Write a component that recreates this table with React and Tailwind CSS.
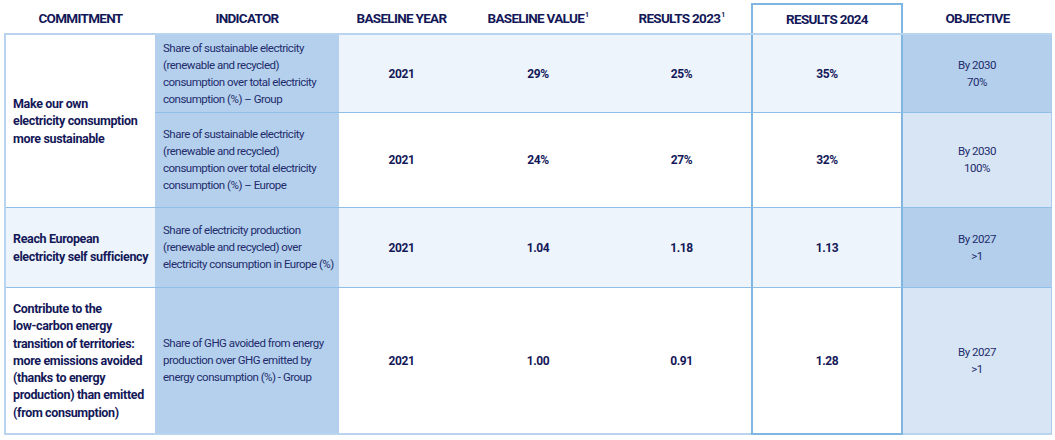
const rowBg = { light: 'bg-[#edf4fb]', white: 'bg-white' };

const rows = [
  {
    indicator: ['Share of sustainable electricity', '(renewable and recycled)', 'consumption over total electricity', 'consumption (%) – Group'],
    values: ['2021', '29%', '25%', '35%'],
    objective: ['By 2030', '70%'],
    bg: 'light',
    objBg: 'bg-[#b4cfeb]',
  },
  {
    indicator: ['Share of sustainable electricity', '(renewable and recycled)', 'consumption over total electricity', 'consumption (%) – Europe'],
    values: ['2021', '24%', '27%', '32%'],
    objective: ['By 2030', '100%'],
    bg: 'white',
    objBg: 'bg-[#d7e5f5]',
  },
  {
    indicator: ['Share of electricity production', '(renewable and recycled) over', 'electricity consumption in Europe (%)'],
    values: ['2021', '1.04', '1.18', '1.13'],
    objective: ['By 2027', '>1'],
    bg: 'light',
    objBg: 'bg-[#b4cfeb]',
  },
  {
    indicator: ['Share of GHG avoided from energy', 'production over GHG emitted by', 'energy consumption (%) - Group'],
    values: ['2021', '1.00', '0.91', '1.28'],
    objective: ['By 2027', '>1'],
    bg: 'white',
    objBg: 'bg-[#d7e5f5]',
    last: true,
  },
];

// row index -> commitment cell (row 1 is covered by the span of row 0)
const commitments = {
  0: { lines: ['Make our own', 'electricity consumption', 'more sustainable'], bg: 'bg-white', span: 'row-span-2' },
  2: { lines: ['Reach European', 'electricity self sufficiency'], bg: 'bg-[#edf4fb]', span: '' },
  3: {
    lines: ['Contribute to the', 'low-carbon energy', 'transition of territories:', 'more emissions avoided', '(thanks to energy', 'production) than emitted', '(from consumption)'],
    bg: 'bg-white',
    span: '',
  },
};

const cols = 'grid-cols-[149px_184px_125px_148px_139px_152px_149px]';

function Header() {
  const heads = ['COMMITMENT', 'INDICATOR', 'BASELINE YEAR', 'BASELINE VALUE', 'RESULTS 2023', 'RESULTS 2024', 'OBJECTIVE'];
  return (
    <div className={`grid ${cols} h-[30px] pl-[2px]`}>
      {heads.map((h, i) => (
        <div
          key={h}
          className={`flex items-center justify-center whitespace-nowrap text-[13.5px] font-bold tracking-[-0.7px] text-[#141858] ${
            i === 5 ? 'border-x-2 border-t-2 border-[#82b6e2]' : ''
          }`}
        >
          {h}
          {(i === 3 || i === 4) && <sup className="ml-[1px] text-[7px]">1</sup>}
        </div>
      ))}
    </div>
  );
}

export default function App() {
  return (
    <div className="w-[1055px] h-[440px] bg-white pl-[4px] pt-[3px] font-['Roboto',sans-serif] text-[#141858]">
      <Header />
      <div className={`grid ${cols} grid-rows-[78px_95px_80px_147px] border-l-2 border-t-2 border-[#b8d4ee] w-[1048px]`}>
        {rows.map((r, ri) => {
          const line = r.last ? 'border-b-2 border-[#b8d4ee]' : 'border-b border-[#8fbee6]';
          const c = commitments[ri];
          return [
            c && (
              <div
                key={`c${ri}`}
                className={`${c.span} ${c.bg} ${line} flex flex-col justify-center whitespace-nowrap pl-[7px] text-[12.5px] font-bold leading-[17.2px] tracking-[-0.35px] text-[#141858]`}
              >
                {c.lines.map((l) => (
                  <span key={l}>{l}</span>
                ))}
              </div>
            ),
            <div
              key={`i${ri}`}
              className={`bg-[#b5d0ec] ${line} flex flex-col justify-center whitespace-nowrap pl-[8px] text-[11.5px] leading-[17px] tracking-[-0.5px] text-[#222c6c]`}
            >
              {r.indicator.map((l) => (
                <span key={l}>{l}</span>
              ))}
            </div>,
            ...r.values.map((v, vi) => (
              <div
                key={`v${ri}${vi}`}
                className={`${rowBg[r.bg]} ${
                  vi === 3
                    ? `border-x-2 border-[#82b6e2] ${r.last ? 'border-b-2 border-b-[#82b6e2]' : 'border-b border-b-[#8fbee6]'}`
                    : line
                } flex items-center justify-center text-[12px] font-bold tracking-[-0.4px]`}
              >
                {v}
              </div>
            )),
            <div
              key={`o${ri}`}
              className={`${r.objBg} ${line} border-r border-r-[#a9cbec] flex flex-col items-center justify-center text-[11.5px] leading-[17px] tracking-[-0.5px] text-[#222c6c]`}
            >
              {r.objective.map((l) => (
                <span key={l}>{l}</span>
              ))}
            </div>,
          ];
        })}
      </div>
    </div>
  );
}
